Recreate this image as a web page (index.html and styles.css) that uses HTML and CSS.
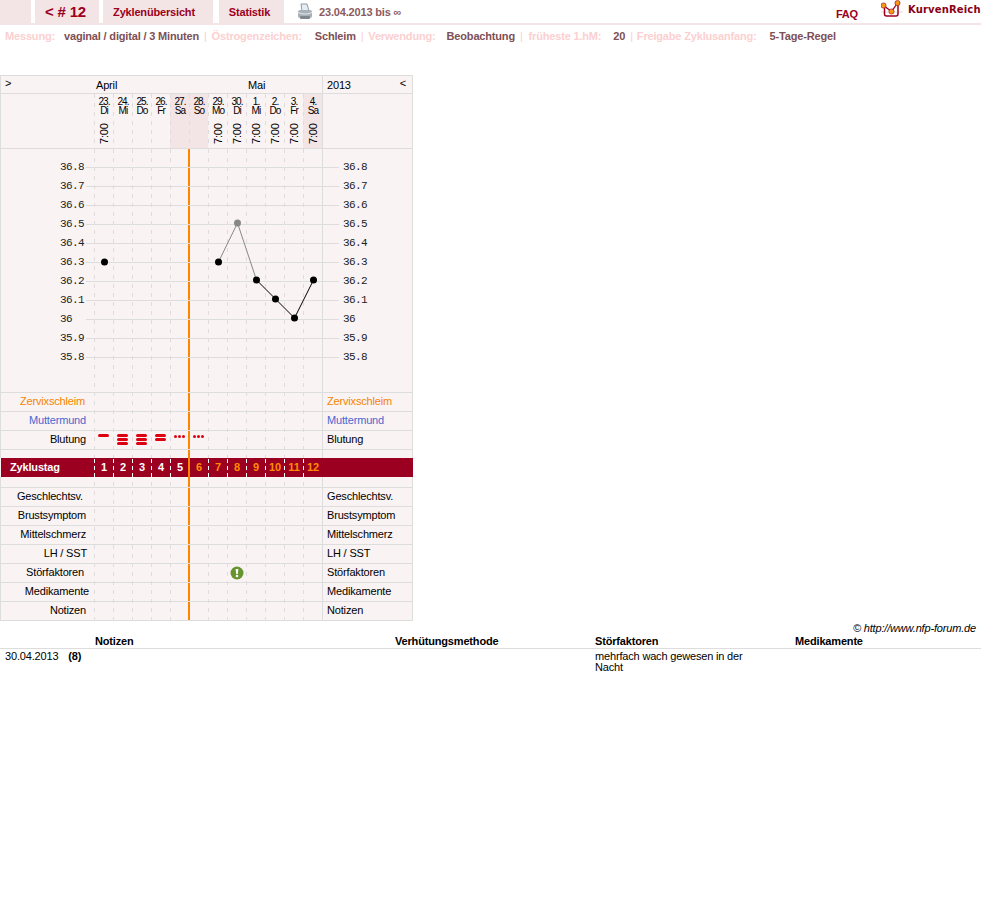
FILE: index.html
```html
<!DOCTYPE html>
<html lang="de">
<head>
    <meta charset="UTF-8">
    <title>Zyklus 12</title>
    <link rel="stylesheet" href="styles.css">
</head>
<body>
    <div class="nav">
        <a class="tab tab-blank"></a>
        <a class="tab tab-cycle">&lt; # 12</a>
        <a class="tab tab-overview">Zyklenübersicht</a>
        <a class="tab tab-stats">Statistik</a>
        <svg class="printer" width="16" height="17" viewBox="0 0 16 17">
            <path d="M4 1 L10 1 L12 8 L5 8 Z" fill="#e8edf2" stroke="#8c9cab" stroke-width="1"/>
            <path d="M1 9 Q1 7 3 7 L13 7 Q15 7 15 9 L15 13 Q15 15 13 15 L3 15 Q1 15 1 13 Z" fill="#a9b1b8"/>
            <path d="M1 9 Q8 12 15 9 L15 10 Q8 13 1 10 Z" fill="#e4e7ea"/>
            <rect x="3" y="13" width="10" height="3" rx="1" fill="#7f878f"/>
        </svg>
        <span class="range">23.04.2013 bis ∞</span>
        <a class="faq">FAQ</a>
        <div class="brand">
            <svg width="22" height="18" viewBox="0 0 22 18">
                <path d="M0 12 H22" stroke="#e3dcdc" stroke-width="1"/>
                <path d="M3.5 8 V14 Q3.5 16 5.5 16 H15 Q17 16 17 14 V5" fill="none" stroke="#a00020" stroke-width="1.5"/>
                <path d="M2.5 5.5 L10.5 11.5 L16.5 3" fill="none" stroke="#a00020" stroke-width="1.3"/>
                <circle cx="2.5" cy="5.5" r="2.6" fill="#f59a12" stroke="#a00020" stroke-width=".6"/>
                <circle cx="10.5" cy="11.5" r="2.6" fill="#f59a12" stroke="#a00020" stroke-width=".6"/>
                <circle cx="16.5" cy="3" r="2.6" fill="#f59a12" stroke="#a00020" stroke-width=".6"/>
            </svg>
            <span class="brand-name">KurvenReich</span>
        </div>
    </div>

    <div class="info">
        <span class="info-label">Messung:</span><span class="info-value">vaginal / digital / 3 Minuten</span><span class="info-sep">|</span>
        <span class="info-label gap-13">Östrogenzeichen:</span><span class="info-value">Schleim</span><span class="info-sep">|</span>
        <span class="info-label gap-11">Verwendung:</span><span class="info-value">Beobachtung</span><span class="info-sep sep-wide">|</span>
        <span class="info-label gap-12">früheste 1.hM:</span><span class="info-value">20</span><span class="info-sep sep-narrow">|</span>
        <span class="info-label gap-13">Freigabe Zyklusanfang:</span><span class="info-value">5-Tage-Regel</span>
    </div>

    <div class="curve">
        <div class="day-lines"><i></i><i></i><i></i><i></i><i></i><i></i><i></i><i></i><i></i><i></i><i></i><i></i></div>
        <div class="cycle-line"></div>

        <div class="row row-month">
            <div class="lab lab-arrow">&gt;</div>
            <div class="days"><span class="month">April</span><span class="month month-may">Mai</span></div>
            <div class="rt rt-year"><span>2013</span><span class="arrow-back">&lt;</span></div>
        </div>

        <div class="row row-dates">
            <div class="lab"></div>
            <div class="days">
                <div class="date"><span>23.</span><span>Di</span><span class="time">7:00</span></div>
                <div class="date"><span>24.</span><span>Mi</span></div>
                <div class="date"><span>25.</span><span>Do</span></div>
                <div class="date"><span>26.</span><span>Fr</span></div>
                <div class="date weekend"><span>27.</span><span>Sa</span></div>
                <div class="date weekend"><span>28.</span><span>So</span></div>
                <div class="date"><span>29.</span><span>Mo</span><span class="time">7:00</span></div>
                <div class="date"><span>30.</span><span>Di</span><span class="time">7:00</span></div>
                <div class="date"><span>1.</span><span>Mi</span><span class="time">7:00</span></div>
                <div class="date"><span>2.</span><span>Do</span><span class="time">7:00</span></div>
                <div class="date"><span>3.</span><span>Fr</span><span class="time">7:00</span></div>
                <div class="date weekend"><span>4.</span><span>Sa</span><span class="time">7:00</span></div>
            </div>
            <div class="rt"></div>
        </div>

        <div class="row row-chart">
            <svg class="chart" width="411" height="243" viewBox="0 0 411 243">
                <g class="grid">
                    <path d="M85 18.5H338M85 37.5H338M85 56.5H338M85 75.5H338M85 94.5H338M85 113.5H338M85 132.5H338M85 151.5H338M85 170.5H338M85 189.5H338M85 208.5H338"/>
                    <path d="M321.5 0V243"/>
                </g>
                <g class="temps">
                    <text x="59" y="22">36.8</text><text x="59" y="41">36.7</text><text x="59" y="60">36.6</text>
                    <text x="59" y="79">36.5</text><text x="59" y="98">36.4</text><text x="59" y="117">36.3</text>
                    <text x="59" y="136">36.2</text><text x="59" y="155">36.1</text><text x="59" y="174">36</text>
                    <text x="59" y="193">35.9</text><text x="59" y="212">35.8</text>
                    <text x="342" y="22">36.8</text><text x="342" y="41">36.7</text><text x="342" y="60">36.6</text>
                    <text x="342" y="79">36.5</text><text x="342" y="98">36.4</text><text x="342" y="117">36.3</text>
                    <text x="342" y="136">36.2</text><text x="342" y="155">36.1</text><text x="342" y="174">36</text>
                    <text x="342" y="193">35.9</text><text x="342" y="212">35.8</text>
                </g>
                <path class="curve-excluded" d="M217.5 113 L236.5 74 L255.5 131"/>
                <path class="curve-main" d="M255.5 131 L274.5 150 L293.5 169 L312.5 131"/>
                <circle cx="103.5" cy="113" r="3.5"/>
                <circle cx="217.5" cy="113" r="3.5"/>
                <circle cx="236.5" cy="74" r="3.5" class="point-excluded"/>
                <circle cx="255.5" cy="131" r="3.5"/>
                <circle cx="274.5" cy="150" r="3.5"/>
                <circle cx="293.5" cy="169" r="3.5"/>
                <circle cx="312.5" cy="131" r="3.5"/>
            </svg>
        </div>

        <div class="row">
            <div class="lab orange pad-9">Zervixschleim</div><div class="days"></div><div class="rt orange">Zervixschleim</div>
        </div>
        <div class="row">
            <div class="lab blue">Muttermund</div><div class="days"></div><div class="rt blue">Muttermund</div>
        </div>
        <div class="row">
            <div class="lab">Blutung</div>
            <div class="days bleeding">
                <div class="mark"><b></b></div>
                <div class="mark"><b></b><b></b><b></b></div>
                <div class="mark"><b></b><b></b><b></b></div>
                <div class="mark"><b></b><b></b></div>
                <div class="mark mark-dots"><u></u><u></u><u></u></div>
                <div class="mark mark-dots"><u></u><u></u><u></u></div>
            </div>
            <div class="rt">Blutung</div>
        </div>
        <div class="row row-gap"><div class="lab"></div><div class="days"></div><div class="rt"></div></div>

        <div class="row-cycle">
            <div class="cycle-title">Zyklustag</div>
            <div class="days">
                <span>1</span><span>2</span><span>3</span><span>4</span><span>5</span>
                <span class="late">6</span><span class="late">7</span><span class="late">8</span>
                <span class="late">9</span><span class="late">10</span><span class="late">11</span><span class="late">12</span>
            </div>
        </div>

        <div class="row row-after"><div class="lab"></div><div class="days"></div><div class="rt"></div></div>

        <div class="row">
            <div class="lab pad-11">Geschlechtsv.</div><div class="days"></div><div class="rt">Geschlechtsv.</div>
        </div>
        <div class="row">
            <div class="lab">Brustsymptom</div><div class="days"></div><div class="rt">Brustsymptom</div>
        </div>
        <div class="row">
            <div class="lab">Mittelschmerz</div><div class="days"></div><div class="rt">Mittelschmerz</div>
        </div>
        <div class="row">
            <div class="lab pad-7">LH / SST</div><div class="days"></div><div class="rt">LH / SST</div>
        </div>
        <div class="row">
            <div class="lab pad-10">Störfaktoren</div>
            <div class="days days-flag">
                <svg width="14" height="14" viewBox="0 0 14 14">
                    <circle cx="7" cy="7" r="6.5" fill="#66942f"/>
                    <path d="M5.6 3 H8.4 L7.8 8 H6.2 Z" fill="#fff"/>
                    <circle cx="7" cy="10" r="1.3" fill="#fff"/>
                </svg>
            </div>
            <div class="rt">Störfaktoren</div>
        </div>
        <div class="row">
            <div class="lab pad-5">Medikamente</div><div class="days"></div><div class="rt">Medikamente</div>
        </div>
        <div class="row">
            <div class="lab">Notizen</div><div class="days"></div><div class="rt">Notizen</div>
        </div>
    </div>

    <div class="credit">© http://www.nfp-forum.de</div>

    <div class="notes notes-head">
        <div></div>
        <div>Notizen</div>
        <div>Verhütungsmethode</div>
        <div>Störfaktoren</div>
        <div>Medikamente</div>
    </div>
    <div class="notes notes-row">
        <div class="note-date">30.04.2013 <b>(8)</b></div>
        <div></div>
        <div></div>
        <div class="note-text">mehrfach wach gewesen in der Nacht</div>
        <div></div>
    </div>
</body>
</html>
```

FILE: styles.css
```css
body {
    margin: 0;
    background-color: white;
    color: #000;
    font-family: "Liberation Sans", Arial, sans-serif;
    font-size: 11px;
    line-height: 11px;
    letter-spacing: -.17px;
}

/* top navigation */
.nav {
    display: flex;
    height: 23px;
    border-bottom: 2px solid #f3e4e6;
    align-items: stretch;
}
.tab {
    box-sizing: border-box;
    background-color: #f3e4e6;
    color: #9b0020;
    font-weight: bold;
    line-height: 24px;
    text-align: center;
}
.tab-blank { width: 31px; margin-right: 4px; }
.tab-cycle { width: 64px; margin-right: 4px; padding-right: 3px; font-size: 15px; }
.tab-overview { width: 110px; margin-right: 6px; padding-right: 8px; }
.tab-stats { width: 65px; margin-right: 13px; padding-right: 4px; }
.printer { margin: 3px 6px 0 0; }
.range {
    color: #8b5a60;
    font-weight: bold;
    line-height: 24px;
}
.faq {
    margin-left: auto;
    margin-right: 23px;
    color: #9b0020;
    font-weight: bold;
    line-height: 29px;
}
.brand {
    display: flex;
    align-items: flex-start;
    width: 100px;
}
.brand svg { margin-right: 5px; flex: none; }
.brand-name {
    color: #8a0015;
    font-family: "DejaVu Sans", sans-serif;
    font-weight: bold;
    font-size: 10px;
    letter-spacing: .15px;
    line-height: 20px;
    white-space: nowrap;
}

/* settings line */
.info {
    padding: 6px 0 0 5px;
    height: 44px;
    box-sizing: border-box;
    margin-bottom: 6px;
    font-weight: bold;
    line-height: 11px;
    white-space: nowrap;
}
.info-label { color: #fbd0d0; margin-right: 9px; }
.info-label.gap-11 { margin-right: 11px; }
.info-label.gap-12 { margin-right: 12px; }
.info-label.gap-13 { margin-right: 13px; }
.info-value { color: #7d5055; margin-right: 5px; }
.info-sep { color: #fbd0d0; font-weight: normal; margin-right: 2px; }
.info-sep.sep-wide { margin-right: 3px; }
.info-sep.sep-narrow { margin-right: 1px; }

/* curve table */
.curve {
    position: relative;
    width: 413px;
    background-color: #f9f3f3;
}
.row {
    position: relative;
    z-index: 3;
    display: flex;
    height: 19px;
    box-sizing: border-box;
    border: 1px solid #ddd;
    border-width: 0 1px 1px;
    line-height: 17px;
}
.lab {
    width: 93px;
    box-sizing: border-box;
    padding-right: 8px;
    text-align: right;
}
.pad-5 { padding-right: 5px; }
.pad-7 { padding-right: 7px; }
.pad-9 { padding-right: 9px; }
.pad-10 { padding-right: 10px; }
.pad-11 { padding-right: 11px; }
.days {
    display: grid;
    grid-template-columns: repeat(12, 19px);
    width: 228px;
}
.rt {
    width: 90px;
    box-sizing: border-box;
    border-left: 1px solid #ddd;
    padding-left: 4px;
}
.orange { color: #f58400; }
.blue { color: #4668cf; }

.day-lines {
    position: absolute;
    left: 94px;
    top: 74px;
    bottom: 0;
    display: flex;
}
.day-lines i {
    width: 19px;
    background: repeating-linear-gradient(#e0dcdc 0 4px, transparent 4px 9px) 0 0 / 1px 100% no-repeat;
}
.cycle-line {
    position: absolute;
    z-index: 2;
    left: 188px;
    top: 73px;
    bottom: 0;
    width: 2px;
    background-color: #ff8400;
}

.row-month {
    height: 19px;
    border-top-width: 1px;
    line-height: 18px;
}
.lab-arrow {
    padding-left: 4px;
    text-align: left;
    line-height: 15px;
}
.month { grid-column: 1 / span 8; padding-left: 2px; }
.month-may { grid-column: 9 / span 4; padding-left: 2px; }
.rt-year { display: flex; justify-content: space-between; padding-right: 6px; }
.arrow-back { line-height: 15px; }

.row-dates { height: 55px; }
.date {
    height: 54px;
    padding: 3px 0 0 1px;
    box-sizing: border-box;
    font-size: 10px;
    line-height: 9px;
    letter-spacing: -.9px;
    text-align: center;
    background: repeating-linear-gradient(#e0dcdc 0 4px, transparent 4px 9px) 0 0 / 1px 100% no-repeat;
}
.date span { display: block; }
.date.weekend { background-color: #f3e4e6; }
.date .time {
    margin: 7px 0 0 3px;
    writing-mode: vertical-rl;
    transform: rotate(180deg);
    font-size: 11px;
    line-height: 12px;
    letter-spacing: -.2px;
    width: 12px;
    height: 22px;
    text-align: left;
}

.row-chart { height: 244px; }
.chart { display: block; }
.grid path { stroke: #ddd; stroke-width: 1; fill: none; shape-rendering: crispEdges; }
.temps text {
    font-family: "Liberation Mono", monospace;
    font-size: 11px;
    letter-spacing: -.6px;
    fill: #222;
    transform: translateY(-1px);
}
.chart circle { fill: #000; }
.chart .point-excluded { fill: #888; }
.curve-main { stroke: #000; fill: none; }
.curve-excluded { stroke: #888; fill: none; }

.bleeding { align-content: start; }
.mark {
    display: flex;
    flex-direction: column;
    align-items: center;
    gap: 1px;
    padding-top: 3px;
}
.mark b {
    display: block;
    width: 11px;
    height: 3px;
    border-radius: 2px;
    background-color: #dd0010;
}
.mark-dots {
    flex-direction: row;
    justify-content: center;
    align-items: flex-start;
    padding-top: 4px;
}
.mark-dots u {
    display: block;
    width: 3px;
    height: 3px;
    border-radius: 50%;
    background-color: #dd0010;
}

.row-gap { height: 8px; border-bottom: 0; }
.row-cycle {
    position: relative;
    z-index: 1;
    display: flex;
    height: 19px;
    margin-left: 1px;
    width: 412px;
    background-color: #9b0020;
    color: white;
    font-weight: bold;
    line-height: 19px;
}
.cycle-title { width: 93px; padding-left: 9px; box-sizing: border-box; }
.row-cycle .days span {
    padding-left: 1px;
    text-align: center;
    background: repeating-linear-gradient(#fff 0 4px, transparent 4px 7px) 0 1px / 1px 100% no-repeat;
}
.row-cycle .days span.late { color: #ff8c00; }
.row-after { height: 11px; }
.days-flag { display: block; box-sizing: border-box; padding: 2px 0 0 136px; }
.days-flag svg { display: block; }

/* footer */
.credit {
    padding: 2px 5px 0 0;
    height: 14px;
    box-sizing: border-box;
    font-style: italic;
    text-align: right;
}
.notes {
    display: grid;
    grid-template-columns: 95px 300px 200px 200px 1fr;
}
.notes-head {
    height: 14px;
    box-sizing: border-box;
    border-bottom: 1px solid #ddd;
    font-weight: bold;
    line-height: 12px;
}
.notes-row { padding-top: 2px; }
.note-date { padding-left: 5px; white-space: nowrap; }
.note-date b { margin-left: 7px; }
.note-text { width: 160px; }
```
